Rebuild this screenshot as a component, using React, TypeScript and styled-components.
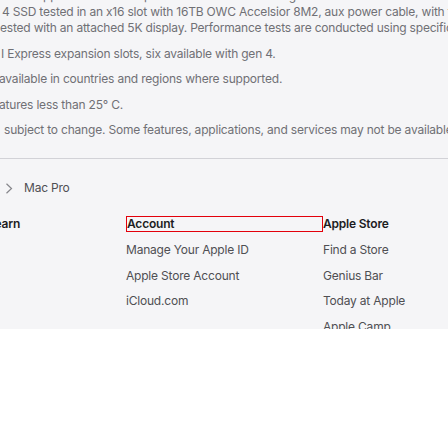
import styled, { createGlobalStyle } from 'styled-components';

const GlobalStyle = createGlobalStyle`
  html, body {
    margin: 0;
    padding: 0;
    background: #ffffff;
    overflow: hidden;
  }
  body {
    font-family: Inter, "Noto Sans", "Liberation Sans", sans-serif;
    -webkit-font-smoothing: antialiased;
  }
`;

const Footer = styled.footer`
  height: 329px;
  overflow: hidden;
  background: #f5f5f7;
  font-size: 12px;
  line-height: 16px;
  letter-spacing: -0.2px;
`;

const Footnotes = styled.div`
  margin-top: -12px;
  color: #707075;
  padding-bottom: 20px;
  border-bottom: 1px solid #d2d2d7;
`;

const Note = styled.p`
  margin: 0 0 9.6px;
  &:last-child {
    margin-bottom: 0;
  }
`;

const Line = styled.span<{ $shift?: number }>`
  display: block;
  white-space: nowrap;
  margin-left: ${({ $shift }) => $shift ?? 0}px;
`;

const Breadcrumb = styled.nav`
  display: flex;
  align-items: center;
  gap: 11px;
  height: 16px;
  margin-top: 21px;
  padding-left: 5px;
  color: #4f4f53;
`;

const Chevron = styled.svg`
  width: 8px;
  height: 11px;
  flex: none;
`;

const Directory = styled.div`
  display: grid;
  grid-template-columns: 126px 197px 197px;
  margin-top: 20px;
`;

const Column = styled.div`
  display: flex;
  flex-direction: column;
  gap: 9.6px;
`;

const ColumnTitle = styled.h3<{ $outlined?: boolean; $shift?: number }>`
  margin: 0 0 0 ${({ $shift }) => $shift ?? 0}px;
  height: 16px;
  font-size: 12px;
  font-weight: 600;
  color: #1d1d1f;
  white-space: nowrap;
  box-sizing: border-box;
  border: ${({ $outlined }) => ($outlined ? '1px solid #e3000b' : 'none')};
  line-height: ${({ $outlined }) => ($outlined ? '14px' : '16px')};
`;

const Links = styled.ul`
  list-style: none;
  margin: 0;
  padding: 0;
  display: flex;
  flex-direction: column;
  gap: 9.6px;
`;

const LinkItem = styled.li`
  color: #4f4f53;
  white-space: nowrap;
  line-height: 16px;
`;

const directory = [
  { title: 'Learn', shift: -12, links: [] as string[] },
  {
    title: 'Account',
    outlined: true,
    links: ['Manage Your Apple ID', 'Apple Store Account', 'iCloud.com'],
  },
  {
    title: 'Apple Store',
    links: ['Find a Store', 'Genius Bar', 'Today at Apple', 'Apple Camp'],
  },
];

export default function App() {
  return (
    <>
      <GlobalStyle />
      <Footer>
        <Footnotes>
          <Note>
            <Line $shift={-40}>
              systems with Apple M2 Ultra and prerelease software. PCIe gen
            </Line>
            <Line $shift={2}>
              4 SSD tested in an x16 slot with 16TB OWC Accelsior 8M2, aux power cable, with two
            </Line>
            <Line $shift={0}>
              ested with an attached 5K display. Performance tests are conducted using specific
            </Line>
          </Note>
          <Note>
            <Line $shift={1}>I Express expansion slots, six available with gen 4.</Line>
          </Note>
          <Note>
            <Line $shift={-1}>available in countries and regions where supported.</Line>
          </Note>
          <Note>
            <Line $shift={-1}>atures less than 25° C.</Line>
          </Note>
          <Note>
            <Line $shift={4}>
              subject to change. Some features, applications, and services may not be available
            </Line>
          </Note>
        </Footnotes>
        <Breadcrumb>
          <Chevron viewBox="0 0 8 11">
            <polyline
              points="1.5,0.8 6.5,5.5 1.5,10.2"
              fill="none"
              stroke="#86868b"
              strokeWidth="1.2"
            />
          </Chevron>
          <span>Mac Pro</span>
        </Breadcrumb>
        <Directory>
          {directory.map((col) => (
            <Column key={col.title}>
              <ColumnTitle $outlined={col.outlined} $shift={col.shift}>
                {col.title}
              </ColumnTitle>
              {col.links.length > 0 && (
                <Links>
                  {col.links.map((link) => (
                    <LinkItem key={link}>{link}</LinkItem>
                  ))}
                </Links>
              )}
            </Column>
          ))}
        </Directory>
      </Footer>
    </>
  );
}
